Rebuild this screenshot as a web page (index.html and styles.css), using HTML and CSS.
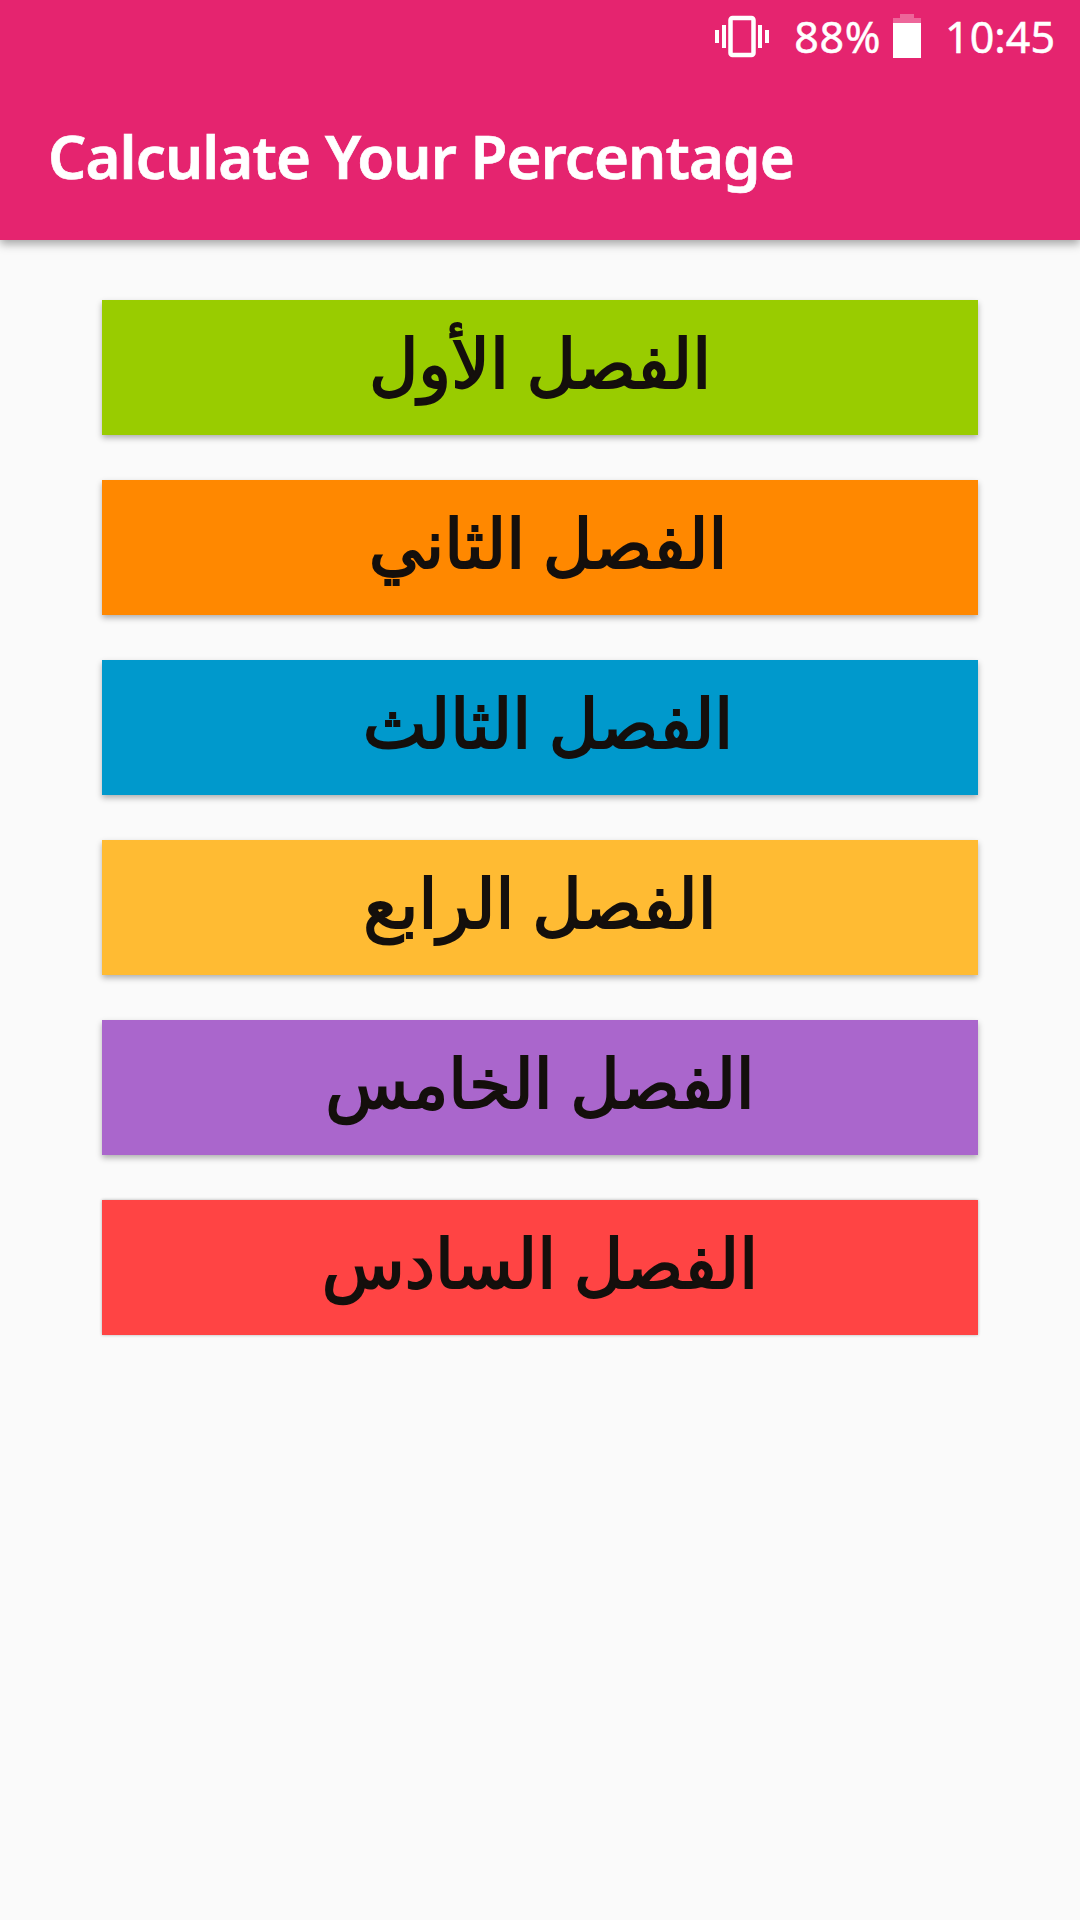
FILE: index.html
```html
<!DOCTYPE html>
<html>
<head>
<meta charset="utf-8">
<title>Calculate Your Percentage</title>
<link rel="stylesheet" href="styles.css">
</head>
<body>
<header class="bar">
	<div class="status">
		<svg class="vibrate" width="54" height="42" viewBox="0 0 54 42">
			<rect x="15.5" y="3" width="23" height="37" rx="2" fill="none" stroke="#fff" stroke-width="4.5"/>
			<path fill="none" stroke="#fff" stroke-width="4" d="M9 10v23M45 10v23M2 15v13M52 15v13"/>
		</svg>
		<span class="percent">88%</span>
		<svg class="battery" width="28" height="44" viewBox="0 0 28 44">
			<path fill="#fff" fill-opacity=".3" d="M7 0h14v4h7v5H0V4h7z"/>
			<path fill="#fff" d="M0 9h28v35H0z"/>
		</svg>
		<span class="time">10:45</span>
	</div>
	<h1>Calculate Your Percentage</h1>
</header>
<ul class="list" dir="rtl">
	<li class="green">الفصل الأول</li>
	<li class="orange">الفصل الثاني</li>
	<li class="blue">الفصل الثالث</li>
	<li class="yellow">الفصل الرابع</li>
	<li class="purple">الفصل الخامس</li>
	<li class="red">الفصل السادس</li>
</ul>
</body>
</html>
```
FILE: styles.css
```css
* {margin:0; padding:0; box-sizing:border-box; }
li{list-style:none; }

body {
	width:1080px;
	height:1920px;
	overflow:hidden;
	background:#fafafa;
	font-family:"Noto Sans", "DejaVu Sans", sans-serif;
}
.bar {
	height:240px;
	background:#e5246f;
	color:#fff;
	box-shadow:0 4px 9px rgba(0,0,0,0.35);
}
.status {
	height:72px;
	display:flex;
	align-items:center;
	justify-content:flex-end;
	padding-right:25px;
	font-size:43px;
	-webkit-text-stroke:0.5px #fff;
}
.percent{margin-left:25px; margin-right:12px; letter-spacing:0.6px;}
.time{margin-left:24px;}
.vibrate{overflow:visible;}
.bar h1 {
	padding-left:48px;
	font-size:60px;
	font-weight:600;
	letter-spacing:-0.9px;
	line-height:168px;
	-webkit-text-stroke:0.7px #fff;
}
.list {
	padding:60px 102px;
	display:flex;
	flex-direction:column;
	gap:45px;
}
.list li {
	height:135px;
	line-height:123px;
	text-align:center;
	font-size:68px;
	color:#140f0c;
	-webkit-text-stroke:2px #140f0c;
	box-shadow:0 3px 6px rgba(0,0,0,0.3);
}
.list .orange, .list .blue{padding-left:16px;}
.green{background:#9c0;}
.orange{background:#f80;}
.blue{background:#09c;}
.yellow{background:#fb3;}
.purple{background:#a6c;}
.list .red{background:#f44; box-shadow:0 0 3px rgba(0,0,0,0.3);}
```
